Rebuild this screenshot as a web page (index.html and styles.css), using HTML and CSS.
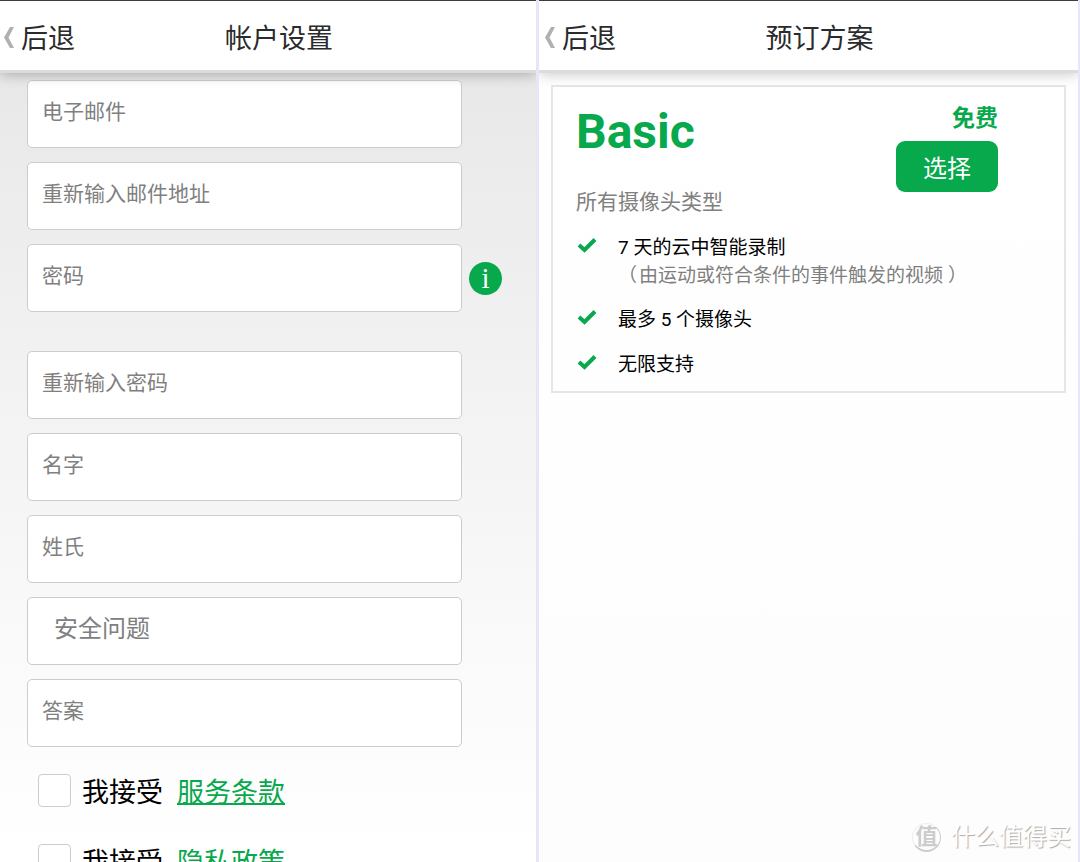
FILE: index.html
```html
<!DOCTYPE html>
<html lang="zh-CN">
<head>
<meta charset="utf-8">
<title>帐户设置</title>
<link rel="stylesheet" href="styles.css">
</head>
<body>
<main class="screens">
  <section class="pane pane-account">
    <header class="bar">
      <button class="back" type="button">
        <svg class="chevron" viewBox="0 0 10 21" aria-hidden="true"><path d="M6 0h4L4.500 10.500 10 21H6L0 10.500z"/></svg>
        后退
      </button>
      <h1 class="title">帐户设置</h1>
    </header>
    <form class="form">
      <input class="field" type="email" placeholder="电子邮件" aria-label="电子邮件">
      <input class="field" type="email" placeholder="重新输入邮件地址" aria-label="重新输入邮件地址">
      <div class="field-row">
        <input class="field" type="password" placeholder="密码" aria-label="密码">
        <button class="info" type="button" aria-label="密码说明">i</button>
      </div>
      <input class="field" type="password" placeholder="重新输入密码" aria-label="重新输入密码">
      <input class="field" type="text" placeholder="名字" aria-label="名字">
      <input class="field" type="text" placeholder="姓氏" aria-label="姓氏">
      <select class="field field-select" aria-label="安全问题"><option>安全问题</option></select>
      <input class="field" type="text" placeholder="答案" aria-label="答案">
      <div class="terms">
        <div class="term">
          <input class="tick" type="checkbox" id="accept-terms">
          <label for="accept-terms">我接受</label>
          <a class="link" href="#terms">服务条款</a>
        </div>
        <div class="term">
          <input class="tick" type="checkbox" id="accept-privacy">
          <label for="accept-privacy">我接受</label>
          <a class="link" href="#privacy">隐私政策</a>
        </div>
      </div>
    </form>
  </section>

  <section class="pane pane-plan">
    <header class="bar">
      <button class="back" type="button">
        <svg class="chevron" viewBox="0 0 10 21" aria-hidden="true"><path d="M6 0h4L4.500 10.500 10 21H6L0 10.500z"/></svg>
        后退
      </button>
      <h1 class="title">预订方案</h1>
    </header>
    <article class="card">
      <div class="card-head">
        <h2 class="plan-name">Basic</h2>
        <div class="offer">
          <strong class="price">免费</strong>
          <button class="choose" type="button">选择</button>
        </div>
      </div>
      <p class="scope">所有摄像头类型</p>
      <ul class="features">
        <li class="feature">
          <svg class="check" viewBox="0 0 20 16" aria-hidden="true"><path d="M2 8l5.500 5L18 2.500"/></svg>
          <div>7 天的云中智能录制<p class="note"><span class="paren" lang="zh-TW">（</span>由运动或符合条件的事件触发的视频<span class="paren" lang="zh-TW">）</span></p></div>
        </li>
        <li class="feature">
          <svg class="check" viewBox="0 0 20 16" aria-hidden="true"><path d="M2 8l5.500 5L18 2.500"/></svg>
          <div>最多 5 个摄像头</div>
        </li>
        <li class="feature">
          <svg class="check" viewBox="0 0 20 16" aria-hidden="true"><path d="M2 8l5.500 5L18 2.500"/></svg>
          <div>无限支持</div>
        </li>
      </ul>
    </article>
    <div class="watermark"><span class="seal">值</span>什么值得买</div>
  </section>
</main>
</body>
</html>
```
FILE: styles.css
```css
* { box-sizing: border-box; }
body, h1, h2, p, ul { margin: 0; padding: 0; }
body {
  font-family: Roboto, "Noto Sans CJK SC", sans-serif;
  color: #000;
  background: #fff;
}
button, input, select { font: inherit; margin: 0; }

.screens {
  display: grid;
  grid-template-columns: 536fr 539fr;
  column-gap: 3px;
  height: 100vh;
  padding-right: 2px;
  overflow: hidden;
  background: #e6e6fa;
}
.pane { position: relative; min-width: 0; overflow: hidden; background: #fff; }
.pane-account { background: linear-gradient(#e8e8e8 70px, #efefef 280px, #f9f9f9 620px, #fff 850px); }
.pane-plan { background: linear-gradient(#fff, #fdfdfd); }

.bar {
  position: relative;
  z-index: 1;
  display: flex;
  align-items: center;
  height: 73px;
  padding: 7px 54px 0 0;
  border-top: 1px solid #3c3c3c;
  border-bottom: 3px solid #dcdcdc;
  background: #fff;
  box-shadow: 0 2px 12px rgba(0, 0, 0, 0.26);
  color: #2b2b2b;
  font-size: 27px;
  line-height: 40px;
}
.pane-plan .bar { padding-left: 2px; padding-right: 56px; box-shadow: 0 2px 12px rgba(0, 0, 0, 0.2); }
.back {
  display: flex;
  align-items: center;
  gap: 7px;
  width: 76px;
  padding: 0 0 0 4px;
  border: 0;
  background: none;
  color: inherit;
  white-space: nowrap;
}
.chevron { flex: none; width: 10px; height: 21px; margin-bottom: 4px; fill: #b0b0b0; }
.title { flex: 1; font-size: 27px; font-weight: 400; text-align: center; }

.form {
  display: flex;
  flex-direction: column;
  gap: 14px;
  padding: 7px 74px 0 27px;
}
.field {
  flex: none;
  width: 100%;
  height: 68px;
  padding: 0 14px 4px;
  border: 1px solid #ccc;
  border-radius: 5px;
  background: #fff;
  color: #808080;
  font-size: 21px;
}
.field::placeholder { color: #808080; opacity: 1; }
.field-select { appearance: none; padding-left: 26px; font-size: 24px; }
.field-row {
  display: flex;
  align-items: center;
  gap: 7px;
  margin: 0 -40px 25px 0;
}
.field-row .field { flex: 1; min-width: 0; }
.info {
  flex: none;
  width: 33px;
  height: 33px;
  padding: 0;
  border: 0;
  border-radius: 50%;
  background: #08a84c;
  color: #fff;
  font: 400 29px/33px "Liberation Serif", serif;
}
.terms { display: grid; gap: 30px; padding: 12px 0 0 11px; }
.term {
  display: flex;
  align-items: center;
  height: 40px;
  font-size: 27px;
  line-height: 40px;
  white-space: nowrap;
}
.tick {
  appearance: none;
  width: 33px;
  height: 33px;
  margin: 0 11px 5px 0;
  border: 1px solid #ccc;
  border-radius: 4px;
  background: #fff;
}
.link { margin-left: 14px; color: #08a84c; text-decoration-thickness: 2px; }

.card {
  margin: 12px;
  padding: 17px 66px 12px 23px;
  border: 2px solid #e6e6e6;
}
.card-head { display: flex; justify-content: space-between; align-items: flex-start; }
.plan-name { color: #08a84c; font-size: 48px; font-weight: 700; line-height: 56px; }
.offer { display: flex; flex-direction: column; align-items: flex-end; gap: 7px; }
.price { color: #08a84c; font-size: 23px; line-height: 30px; }
.choose {
  width: 102px;
  height: 51px;
  padding: 0;
  border: 0;
  border-radius: 9px;
  background: #08a84c;
  color: #fff;
  font-size: 24px;
}
.scope { margin-top: -6px; color: #808080; font-size: 21px; line-height: 32px; }
.features { display: grid; gap: 17px; padding-top: 16px; list-style: none; }
.feature { display: flex; gap: 21px; padding-left: 1px; font-size: 19px; line-height: 28px; }
.check {
  flex: none;
  width: 20px;
  height: 16px;
  margin-top: 3px;
  fill: none;
  stroke: #08a84c;
  stroke-width: 4;
}
.note { color: #808080; line-height: 27px; white-space: nowrap; }
.paren { font-family: "Noto Sans CJK TC", sans-serif; line-height: 1; }
.paren:first-child { margin-right: 2px; }
.paren:last-child { margin-left: 5px; }

.watermark {
  position: absolute;
  right: 7px;
  bottom: 9px;
  display: flex;
  align-items: center;
  gap: 10px;
  color: #fff;
  font-size: 24px;
  line-height: 32px;
  text-shadow: 1px 1px 1px #aaa;
}
.seal {
  width: 29px;
  height: 29px;
  border: 1px solid #eee;
  border-right-color: #ccc;
  border-bottom: 2px solid #ccc;
  border-radius: 50%;
  color: #ccc;
  font-size: 22px;
  font-weight: 700;
  line-height: 26px;
  text-align: center;
  text-shadow: none;
}
```
